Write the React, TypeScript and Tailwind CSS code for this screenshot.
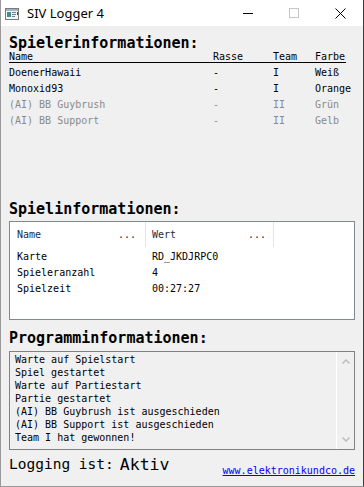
import React from "react";

const mono = { fontFamily: '"DejaVu Sans Mono", "Liberation Mono", monospace' };

const players = [
  { name: "DoenerHawaii", rasse: "-", team: "I", farbe: "Weiß", ai: false },
  { name: "Monoxid93", rasse: "-", team: "I", farbe: "Orange", ai: false },
  { name: "(AI) BB Guybrush", rasse: "-", team: "II", farbe: "Grün", ai: true },
  { name: "(AI) BB Support", rasse: "-", team: "II", farbe: "Gelb", ai: true },
];

const gameInfo = [
  ["Karte", "RD_JKDJRPC0"],
  ["Spieleranzahl", "4"],
  ["Spielzeit", "00:27:27"],
];

const log = [
  "Warte auf Spielstart",
  "Spiel gestartet",
  "Warte auf Partiestart",
  "Partie gestartet",
  "(AI) BB Guybrush ist ausgeschieden",
  "(AI) BB Support ist ausgeschieden",
  "Team I hat gewonnen!",
];

function AppIcon() {
  return (
    <svg width="14" height="12" viewBox="0 0 14 12">
      <rect x="0.5" y="0.5" width="13" height="11" fill="#f4f4f4" stroke="#7a7a7a" />
      <rect x="1" y="1" width="12" height="2" fill="#9fb4c8" />
      <rect x="2" y="4" width="4" height="5" fill="#3f8f8a" />
      <rect x="7" y="4" width="4" height="1" fill="#6a7f95" />
      <rect x="7" y="6" width="4" height="1" fill="#6a7f95" />
      <rect x="7" y="8" width="3" height="1" fill="#6a7f95" />
      <rect x="12" y="4" width="1" height="3" fill="#2a4a7a" />
    </svg>
  );
}

export default function App() {
  return (
    <div
      className="w-[364px] h-[487px] bg-[#f0f0f0] border-r border-r-[#3c3c3c] border-b border-b-[#9a9a9a] border-l border-l-[#9a9a9a] overflow-hidden flex flex-col"
    >
      {/* Title bar */}
      <div className="h-[26px] bg-white flex items-center shrink-0 relative">
        <div className="ml-[4px] mt-[1px] flex items-center">
          <AppIcon />
        </div>
        <span
          className="ml-[8px] text-[13px] text-black leading-[26px]"
          style={{ fontFamily: '"Noto Sans", "Open Sans", sans-serif' }}
        >
          SIV Logger 4
        </span>
        <div className="ml-auto flex items-center h-full">
          <div className="w-[46px] h-full flex items-center justify-center">
            <div className="w-[10px] h-[1px] bg-black" />
          </div>
          <div className="w-[46px] h-full flex items-center justify-center">
            <div className="w-[10px] h-[10px] border border-[#c6c6c6]" />
          </div>
          <div className="w-[46px] h-full flex items-center justify-center">
            <svg width="11" height="11" viewBox="0 0 11 11">
              <path d="M0.5 0.5 L10.5 10.5 M10.5 0.5 L0.5 10.5" stroke="#000" strokeWidth="1" />
            </svg>
          </div>
        </div>
      </div>

      <div className="pl-[8px] flex flex-col" style={mono}>
        {/* Spielerinformationen */}
        <div className="mt-[9px] h-[17px] leading-[17px] text-[15px] font-bold text-black">
          Spielerinformationen:
        </div>
        <div className="w-[337px]">
          <div className="h-[11px] flex text-[10px] leading-[10px] text-black border-b border-black">
            <span className="w-[204px] shrink-0">Name</span>
            <span className="w-[60px] shrink-0">Rasse</span>
            <span className="w-[42px] shrink-0">Team</span>
            <span className="shrink-0">Farbe</span>
          </div>
          <div className="pt-[1px]">
            {players.map((p) => (
              <div
                key={p.name}
                className={`h-[16px] flex items-center text-[10px] whitespace-nowrap ${p.ai ? "text-[#8a8a8a]" : "text-black"}`}
              >
                <span className="w-[204px] shrink-0">{p.name}</span>
                <span className="w-[60px] shrink-0">{p.rasse}</span>
                <span className="w-[42px] shrink-0">{p.team}</span>
                <span className="shrink-0">{p.farbe}</span>
              </div>
            ))}
          </div>
        </div>

        {/* Spielinformationen */}
        <div className="mt-[72px] h-[18px] leading-[18px] text-[15px] font-bold text-black">
          Spielinformationen:
        </div>
        <div className="mt-[3px] w-[346px] h-[99px] bg-white border border-[#828790]">
          <div className="h-[25px] flex text-[10px] text-[#1b2b45]">
            <div className="w-[136px] h-full flex items-center justify-between pl-[7px] pr-[9px] border-r border-[#e5e5e5]">
              <span>Name</span>
              <span>...</span>
            </div>
            <div className="w-[128px] h-full flex items-center justify-between pl-[6px] pr-[7px] border-r border-[#e5e5e5]">
              <span>Wert</span>
              <span>...</span>
            </div>
          </div>
          <div className="pt-[1px]">
            {gameInfo.map(([k, v], i) => (
              <div
                key={k}
                className={`${i === 2 ? "h-[17px]" : "h-[16px]"} flex items-center text-[10px] text-black`}
              >
                <span className="w-[136px] shrink-0 pl-[7px]">{k}</span>
                <span className="pl-[6px]">{v}</span>
              </div>
            ))}
          </div>
        </div>

        {/* Programminformationen */}
        <div className="mt-[9px] h-[18px] leading-[18px] text-[15px] font-bold text-black">
          Programminformationen:
        </div>
        <div className="mt-[4px] w-[346px] h-[99px] bg-[#f0f0f0] border border-[#828282] flex">
          <div className="flex-1 pl-[5px] pt-[1px]">
            {log.map((l) => (
              <div key={l} className="h-[13px] leading-[13px] text-[10px] text-black whitespace-pre">
                {l}
              </div>
            ))}
          </div>
          <div className="w-[18px] h-full border-l border-white flex flex-col items-center justify-between py-[7px]">
            <svg width="8" height="5" viewBox="0 0 8 5">
              <path d="M0.5 4.5 L4 1 L7.5 4.5" stroke="#bdbdbd" strokeWidth="1.5" fill="none" />
            </svg>
            <svg width="8" height="5" viewBox="0 0 8 5">
              <path d="M0.5 0.5 L4 4 L7.5 0.5" stroke="#bdbdbd" strokeWidth="1.5" fill="none" />
            </svg>
          </div>
        </div>

        {/* Bottom row */}
        <div className="mt-[6px] w-[346px] flex justify-between items-start">
          <div className="h-[18px] flex items-center text-black">
            <span className="text-[14.5px]">Logging ist:</span>
            <span className="ml-[6px] text-[16.5px]">Aktiv</span>
          </div>
          <a
            href="#"
            className="mt-[9px] leading-[12px] text-[10px] text-[#0000ff] underline"
          >
            www.elektronikundco.de
          </a>
        </div>
      </div>
    </div>
  );
}
